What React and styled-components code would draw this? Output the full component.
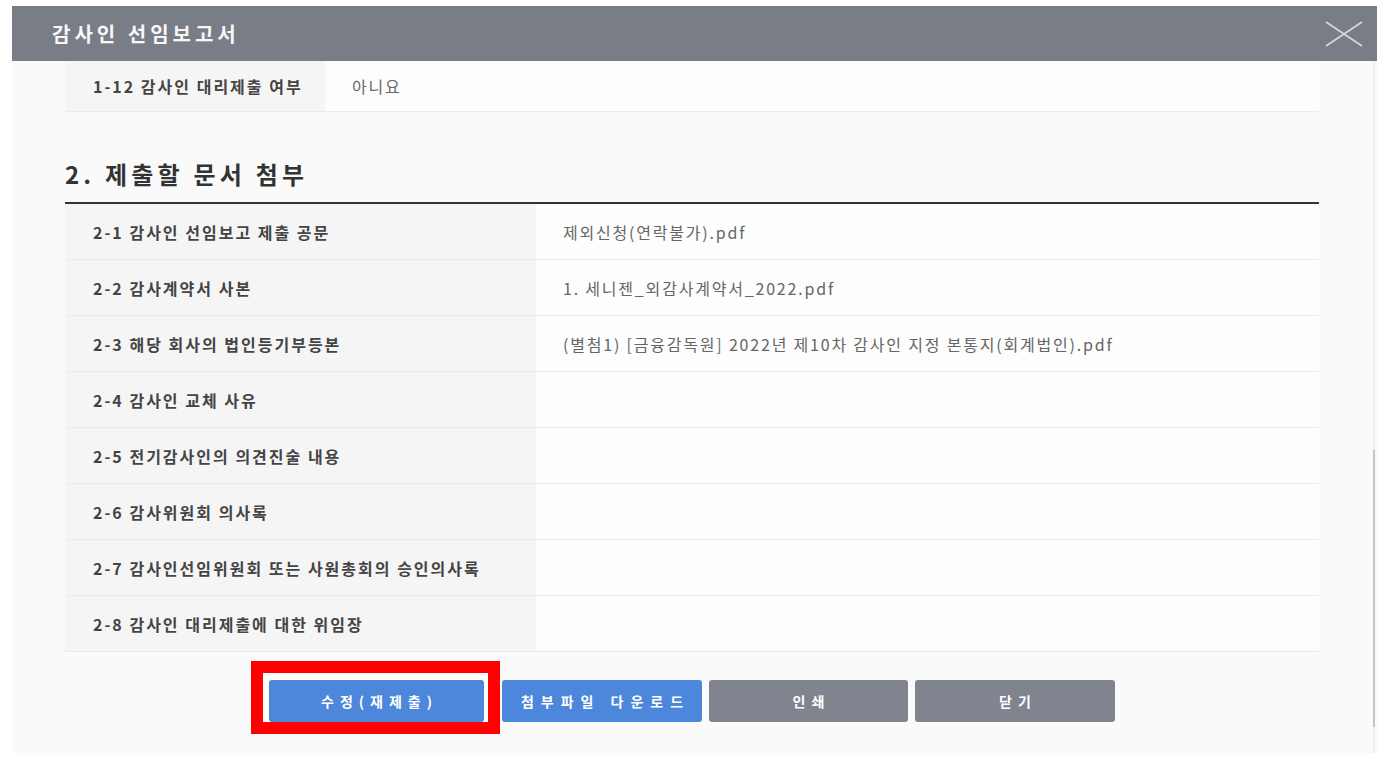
import React from "react";
import styled, { createGlobalStyle } from "styled-components";

const GlobalStyle = createGlobalStyle`
  html, body {
    margin: 0;
    padding: 0;
    background: #ffffff;
    font-family: "Noto Sans CJK KR", "Noto Sans", sans-serif;
  }
`;

const attachments = [
  { label: "2-1 감사인 선임보고 제출 공문", file: "제외신청(연락불가).pdf" },
  { label: "2-2 감사계약서 사본", file: "1. 세니젠_외감사계약서_2022.pdf" },
  {
    label: "2-3 해당 회사의 법인등기부등본",
    file: "(별첨1) [금융감독원] 2022년 제10차 감사인 지정 본통지(회계법인).pdf",
  },
  { label: "2-4 감사인 교체 사유", file: "" },
  { label: "2-5 전기감사인의 의견진술 내용", file: "" },
  { label: "2-6 감사위원회 의사록", file: "" },
  { label: "2-7 감사인선임위원회 또는 사원총회의 승인의사록", file: "" },
  { label: "2-8 감사인 대리제출에 대한 위임장", file: "" },
];

export default function App() {
  return (
    <>
      <GlobalStyle />
      <Modal>
        <Header>
          <Title>감사인 선임보고서</Title>
          <CloseButton type="button" aria-label="닫기">
            <svg width="38" height="26" viewBox="0 0 38 26">
              <path d="M1 1 L37 25 M37 1 L1 25" stroke="#d6d7da" strokeWidth="1.8" fill="none" />
            </svg>
          </CloseButton>
        </Header>

        <Body>
          <Row $height={51}>
            <LabelCell $width={260}>1-12 감사인 대리제출 여부</LabelCell>
            <ValueCell>아니요</ValueCell>
          </Row>

          <SectionTitle>2. 제출할 문서 첨부</SectionTitle>

          <Table>
            {attachments.map((item) => (
              <Row key={item.label} $height={56}>
                <LabelCell $width={471}>{item.label}</LabelCell>
                <ValueCell>{item.file}</ValueCell>
              </Row>
            ))}
          </Table>

          <ButtonBar>
            <Highlighted>
              <Button $primary $width={215}>수정(재제출)</Button>
            </Highlighted>
            <Button $primary $width={200} $spacing={7}>첨부파일 다운로드</Button>
            <Button $width={199}>인쇄</Button>
            <Button $width={200}>닫기</Button>
          </ButtonBar>

          <ScrollTrack>
            <ScrollThumb />
          </ScrollTrack>
        </Body>
      </Modal>
    </>
  );
}

const Modal = styled.div`
  margin: 6px 0 0 12px;
  width: 1365px;
  display: flex;
  flex-direction: column;
`;

const Header = styled.div`
  height: 55px;
  background: #797d86;
  display: flex;
  align-items: center;
  justify-content: space-between;
  padding: 0 14px 0 40px;
`;

const Title = styled.h1`
  margin: 0;
  font-size: 20px;
  font-weight: 700;
  letter-spacing: 4px;
  color: #f7f7f8;
`;

const CloseButton = styled.button`
  border: 0;
  background: none;
  padding: 0;
  display: flex;
  cursor: pointer;
`;

const Body = styled.div`
  position: relative;
  background: #fafafa;
  padding: 0 58px 31px 53px;
`;

const Row = styled.div`
  display: flex;
  height: ${(p) => p.$height}px;
  border-bottom: 1px solid #ebebeb;
  box-sizing: border-box;
`;

const LabelCell = styled.div`
  width: ${(p) => p.$width}px;
  flex-shrink: 0;
  background: #f5f5f5;
  display: flex;
  align-items: center;
  padding-left: 28px;
  box-sizing: border-box;
  font-size: 16px;
  font-weight: 700;
  letter-spacing: 2px;
  color: #444444;
`;

const ValueCell = styled.div`
  flex: 1;
  background: #fdfdfd;
  display: flex;
  align-items: center;
  padding-left: 27px;
  font-size: 16px;
  letter-spacing: 1.8px;
  color: #666666;
`;

const SectionTitle = styled.h2`
  margin: 46px 0 13px;
  line-height: 31px;
  font-size: 24px;
  font-weight: 700;
  letter-spacing: 4.2px;
  color: #333333;
`;

const Table = styled.div`
  border-top: 2px solid #333333;
`;

const ButtonBar = styled.div`
  display: flex;
  justify-content: center;
  gap: 7px;
  margin-top: 28px;
`;

const Highlighted = styled.div`
  position: relative;
  display: flex;
  margin-right: 11px;

  &::before {
    content: "";
    position: absolute;
    left: -18px;
    right: -16px;
    top: -19px;
    bottom: -12px;
    border: 12px solid #ff0000;
    background: #ffffff;
    z-index: 0;
  }

  & > * {
    position: relative;
    z-index: 1;
  }
`;

const Button = styled.button`
  width: ${(p) => p.$width}px;
  height: 42px;
  border: 0;
  border-radius: 3px;
  background: ${(p) => (p.$primary ? "#4c87db" : "#7f848e")};
  color: #ffffff;
  font-family: "Noto Sans CJK KR", "Noto Sans", sans-serif;
  font-size: 14px;
  font-weight: 700;
  letter-spacing: ${(p) => p.$spacing ?? 6}px;
  padding: 0 0 0 ${(p) => p.$spacing ?? 6}px;
  cursor: pointer;
`;

const ScrollTrack = styled.div`
  position: absolute;
  top: 0;
  bottom: 0;
  right: 2px;
  width: 2px;
  background: #eeeeee;
`;

const ScrollThumb = styled.div`
  position: absolute;
  left: 0;
  width: 2px;
  top: 389px;
  height: 277px;
  background: #c4c4c4;
`;
